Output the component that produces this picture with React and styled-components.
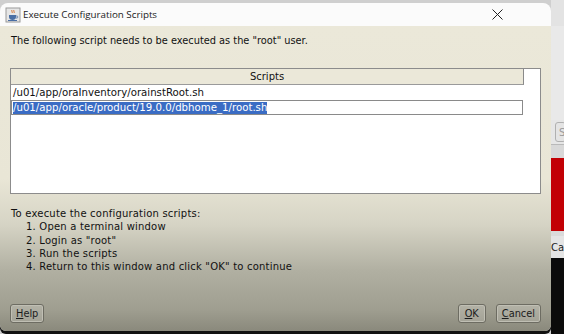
import React from "react";
import styled, { createGlobalStyle } from "styled-components";

const GlobalStyle = createGlobalStyle`
  html, body {
    margin: 0;
    padding: 0;
  }
  body {
    width: 564px;
    height: 334px;
    overflow: hidden;
    background: #cfcfcf;
    font-family: "DejaVu Sans", sans-serif;
  }
`;

const Screen = styled.div`
  display: flex;
  width: 564px;
  height: 334px;
`;

const Dialog = styled.div`
  width: 551px;
  margin-top: 3px;
  height: 328px;
  display: flex;
  flex-direction: column;
  border-radius: 8px 8px 6px 6px;
  overflow: hidden;
  box-shadow: 0 3px 0 #111;
`;

const TitleBar = styled.div`
  height: 23px;
  background: #fbfbfb;
  display: flex;
  align-items: center;
  padding: 0 0 0 5px;
  flex-shrink: 0;
`;

const TitleText = styled.span`
  font-family: "Open Sans", "Noto Sans", sans-serif;
  font-size: 9.8px;
  color: #1a1a1a;
  margin-left: 2px;
  flex: 1;
`;

const CloseButton = styled.div`
  width: 46px;
  height: 23px;
  margin-right: 31px;
  display: flex;
  align-items: center;
  justify-content: center;
`;

const Body = styled.div`
  flex: 1;
  display: flex;
  flex-direction: column;
  padding: 8px 10px 8px 10px;
  background: linear-gradient(
    180deg,
    #ebe8d9 0%,
    #e9e6d6 50%,
    #d6d4c5 65%,
    #b1b0a2 80%,
    #9f9e90 93%,
    #8a897c 100%
  );
  font-size: 9.8px;
  color: #111;
`;

const Message = styled.div`
  line-height: 14px;
  padding-left: 1px;
`;

const Table = styled.div`
  margin-top: 20px;
  width: 531px;
  height: 126px;
  box-sizing: border-box;
  border: 1px solid #8c8c8c;
  background: #fff;
  display: flex;
  flex-direction: column;
`;

const HeaderRow = styled.div`
  height: 16px;
  width: 513px;
  display: flex;
  background: #ebe8d9;
  border-bottom: 1px solid #9a9a9a;
  border-right: 1px solid #8a8a8a;
  box-sizing: border-box;
  align-items: center;
  justify-content: center;
  font-size: 10px;
`;

const Row = styled.div`
  height: 15px;
  width: 512px;
  box-sizing: border-box;
  display: flex;
  align-items: center;
  padding-left: 1px;
  font-size: 10.2px;
  border: 1px solid ${(p) => (p.$focused ? "#8a8a8a" : "transparent")};
`;

const Selected = styled.span`
  background: #3a6cc4;
  color: #fff;
  line-height: 12px;
`;

const Instructions = styled.div`
  margin-top: 13px;
  line-height: 13.3px;
  padding-left: 1px;
  font-size: 10px;
  letter-spacing: 0.2px;
`;

const Step = styled.div`
  padding-left: 15px;
`;

const ButtonRow = styled.div`
  margin-top: auto;
  display: flex;
  align-items: center;
  gap: 10px;
`;

const Button = styled.div`
  height: 19px;
  padding: 0 ${(p) => p.$pad || 5}px;
  box-sizing: border-box;
  display: flex;
  align-items: center;
  border: 1px solid #6d6c62;
  border-radius: 3px;
  background: linear-gradient(180deg, #b3b2a6 0%, #a3a296 100%);
  font-size: 9.8px;
  color: #1b1b1b;
  box-shadow: inset 0 0 0 1px #c0bfb4;
  margin-left: ${(p) => (p.$push ? "auto" : "0")};
`;

const Mnemonic = styled.span`
  text-decoration: underline;
`;

const Backdrop = styled.div`
  width: 13px;
  display: flex;
  flex-direction: column;
`;

const Band = styled.div`
  height: ${(p) => p.$h}px;
  background: ${(p) => p.$bg};
  border-top: ${(p) => (p.$line ? "1px solid #b9b9b9" : "none")};
  box-sizing: border-box;
  font-family: "DejaVu Sans", sans-serif;
  font-size: 10px;
  color: #222;
  display: flex;
  align-items: center;
  overflow: hidden;
  white-space: nowrap;
`;

const BackButton = styled.div`
  margin-left: 4px;
  height: 18px;
  width: 20px;
  border: 1px solid #b0b0b0;
  border-radius: 3px;
  background: #e4e4e4;
  color: #999;
  padding-left: 3px;
  display: flex;
  align-items: center;
`;

const JavaIcon = () => (
  <svg width="16" height="16" viewBox="0 0 16 16">
    <rect x="1" y="1" width="14" height="14" fill="#e6e6e6" stroke="#9a9a9a" />
    <path d="M7 3c-1 1 1 2 0 3M9 3c-1 1 1 2 0 3" stroke="#d2691e" fill="none" strokeWidth="0.9" />
    <path d="M4 8h7v2c0 2-1.5 3-3.5 3S4 12 4 10z" fill="#4a6fa5" />
    <path d="M11 9h1.2c.8 0 .8 2 0 2H11" stroke="#4a6fa5" fill="none" strokeWidth="0.8" />
    <rect x="3" y="13" width="9" height="1" fill="#4a6fa5" />
  </svg>
);

const CloseIcon = () => (
  <svg width="11" height="11" viewBox="0 0 11 11">
    <path d="M0.5 0.5L10.5 10.5M10.5 0.5L0.5 10.5" stroke="#222" strokeWidth="1" />
  </svg>
);

export default function App() {
  return (
    <>
      <GlobalStyle />
      <Screen>
        <Dialog>
          <TitleBar>
            <JavaIcon />
            <TitleText>Execute Configuration Scripts</TitleText>
            <CloseButton>
              <CloseIcon />
            </CloseButton>
          </TitleBar>
          <Body>
            <Message>The following script needs to be executed as the "root" user.</Message>
            <Table>
              <HeaderRow>Scripts</HeaderRow>
              <Row>/u01/app/oraInventory/orainstRoot.sh</Row>
              <Row $focused>
                <Selected>/u01/app/oracle/product/19.0.0/dbhome_1/root.sh</Selected>
              </Row>
            </Table>
            <Instructions>
              To execute the configuration scripts:
              <Step>1. Open a terminal window</Step>
              <Step>2. Login as "root"</Step>
              <Step>3. Run the scripts</Step>
              <Step>4. Return to this window and click "OK" to continue</Step>
            </Instructions>
            <ButtonRow>
              <Button>
                <Mnemonic>H</Mnemonic>elp
              </Button>
              <Button $push $pad={6}>
                <Mnemonic>O</Mnemonic>K
              </Button>
              <Button>
                <Mnemonic>C</Mnemonic>ancel
              </Button>
            </ButtonRow>
          </Body>
        </Dialog>
        <Backdrop>
          <Band $h={26} $bg="#e3e3e3" />
          <Band $h={94} $bg="#e9e9e9" />
          <Band $h={24} $bg="#e6e6e6">
            <BackButton>S</BackButton>
          </Band>
          <Band $h={14} $bg="#d8d8d8" $line />
          <Band $h={73} $bg="#c20005" />
          <Band $h={5} $bg="#dadada" />
          <Band $h={22} $bg="#e4e4e4">Car</Band>
          <Band $h={76} $bg="#0b0b0b" />
        </Backdrop>
      </Screen>
    </>
  );
}
